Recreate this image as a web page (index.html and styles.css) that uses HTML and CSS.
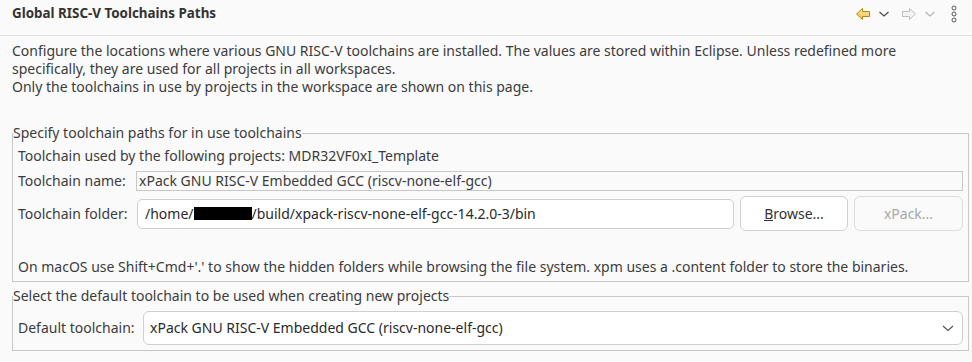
FILE: index.html
```html
<!DOCTYPE html>
<html>
<head>
<meta charset="utf-8">
<link rel="stylesheet" href="styles.css">
</head>
<body>
<div class="page">
  <div class="header">
    <div class="title">Global RISC-V Toolchains Paths</div>
    <div class="tools">
      <svg class="ico back" width="16" height="14" viewBox="0 0 16 14">
        <defs><linearGradient id="gy" x1="0" y1="0" x2="0" y2="1"><stop offset="0" stop-color="#fde9a6"/><stop offset="1" stop-color="#f3c24a"/></linearGradient></defs>
        <polygon points="1.5,7 7.5,1.5 7.5,4.5 14.5,4.5 14.5,9.5 7.5,9.5 7.5,12.5" fill="url(#gy)" stroke="#b8860b" stroke-width="1" stroke-linejoin="round"/>
      </svg>
      <svg class="chev" width="12" height="14" viewBox="0 0 12 14"><polyline points="1.5,5 6,9 10.5,5" fill="none" stroke="#4a4a4a" stroke-width="1.2"/></svg>
      <svg class="ico fwd" width="16" height="14" viewBox="0 0 16 14">
        <polygon points="14.5,7 8.5,1.5 8.5,4.5 1.5,4.5 1.5,9.5 8.5,9.5 8.5,12.5" fill="#f2f2f2" stroke="#bdbdbd" stroke-width="1" stroke-linejoin="round"/>
      </svg>
      <svg class="chev" width="12" height="14" viewBox="0 0 12 14"><polyline points="1.5,5 6,9 10.5,5" fill="none" stroke="#b5b5b5" stroke-width="1.2"/></svg>
      <svg class="dots" width="8" height="18" viewBox="0 0 8 18"><circle cx="4" cy="3" r="2" fill="none" stroke="#555" stroke-width="1"/><circle cx="4" cy="9" r="2" fill="none" stroke="#555" stroke-width="1"/><circle cx="4" cy="15" r="2" fill="none" stroke="#555" stroke-width="1"/></svg>
    </div>
  </div>
  <div class="desc">
    <div>Configure the locations where various GNU RISC-V toolchains are installed. The values are stored within Eclipse. Unless redefined more</div>
    <div>specifically, they are used for all projects in all workspaces.</div>
    <div>Only the toolchains in use by projects in the workspace are shown on this page.</div>
  </div>
  <fieldset class="group g1">
    <legend>Specify toolchain paths for in use toolchains</legend>
    <div class="inner">
      <div class="line">Toolchain used by the following projects: MDR32VF0xI_Template</div>
      <div class="row r-name">
        <span class="lbl">Toolchain name:</span>
        <div class="ro">xPack GNU RISC-V Embedded GCC (riscv-none-elf-gcc)</div>
      </div>
      <div class="row r-folder">
        <span class="lbl">Toolchain folder:</span>
        <div class="input">/home/<span class="redact"></span>/build/xpack-riscv-none-elf-gcc-14.2.0-3/bin</div>
        <div class="btn"><u>B</u>rowse...</div>
        <div class="btn dis">xPack...</div>
      </div>
      <div class="line note">On macOS use Shift+Cmd+'.' to show the hidden folders while browsing the file system. xpm uses a .content folder to store the binaries.</div>
    </div>
  </fieldset>
  <fieldset class="group g2">
    <legend>Select the default toolchain to be used when creating new projects</legend>
    <div class="inner">
      <div class="row r-def">
        <span class="lbl lbl2">Default toolchain:</span>
        <div class="combo">
          <span>xPack GNU RISC-V Embedded GCC (riscv-none-elf-gcc)</span>
          <svg width="14" height="10" viewBox="0 0 14 10"><polyline points="2,3 7,7.5 12,3" fill="none" stroke="#555" stroke-width="1.2"/></svg>
        </div>
      </div>
    </div>
  </fieldset>
</div>
</body>
</html>
```
FILE: styles.css
```css
*{box-sizing:border-box;}
html,body{margin:0;padding:0;background:#fafafa;}
body{font-family:"Noto Sans","Open Sans",sans-serif;font-size:14px;color:#3c3c3c;line-height:18px;width:972px;height:362px;overflow:hidden;}
.page{display:flex;flex-direction:column;}
.header{height:36px;border-bottom:1px solid #e0e0e0;display:flex;justify-content:space-between;align-items:flex-start;padding-left:12px;}
.title{font-weight:bold;font-size:13.4px;color:#333;padding-top:4px;}
.tools{display:flex;align-items:center;height:28px;margin-right:14px;}
.tools svg{display:block;}
.back{margin-right:7px;}
.fwd{margin-left:11px;margin-right:7px;}
.dots{margin-left:14px;}
.desc{padding:6px 12px 0;white-space:nowrap;}
.group{margin:28px 3px 0 12px;padding:0;border:1px solid #c8c8c8;min-width:0;}
.group legend{padding:0;line-height:18px;white-space:nowrap;}
.g2{margin-top:5px;}
.inner{padding:5px;display:flex;flex-direction:column;}
.line{white-space:nowrap;}
.row{display:flex;align-items:center;}
.lbl{width:118px;flex:none;white-space:nowrap;}
.lbl2{width:125px;}
.r-name{margin-top:6px;}
.ro{flex:1;height:20px;border:1px solid #c8c8c8;padding-left:2px;line-height:18px;white-space:nowrap;background:#fafafa;}
.r-folder{margin-top:5px;height:35px;}
.input{width:597px;flex:none;margin-left:1px;height:30px;border:1px solid #cfcfcf;border-radius:5px;background:#fff;padding-left:7px;white-space:nowrap;color:#2a2a2a;display:flex;align-items:center;}
.redact{display:inline-block;width:58px;height:13px;background:#000;}
.btn{width:108px;flex:none;height:35px;border:1px solid #d0d0d0;border-radius:6px;background:#fff;text-align:center;line-height:33px;margin-left:6px;color:#333;}
.btn u{text-decoration:none;border-bottom:1.5px solid #333;line-height:13px;display:inline-block;}
.btn.dis{width:109px;background:#fafafa;border-color:#dcdcdc;color:#a8a8a8;}
.note{margin-top:27px;}
.r-def{margin-top:1px;}
.combo{flex:1;height:34px;border:1px solid #cfcfcf;border-radius:6px;background:#fff;display:flex;align-items:center;justify-content:space-between;padding:0 7px 0 6px;white-space:nowrap;color:#2a2a2a;}
.combo svg{display:block;}
```
